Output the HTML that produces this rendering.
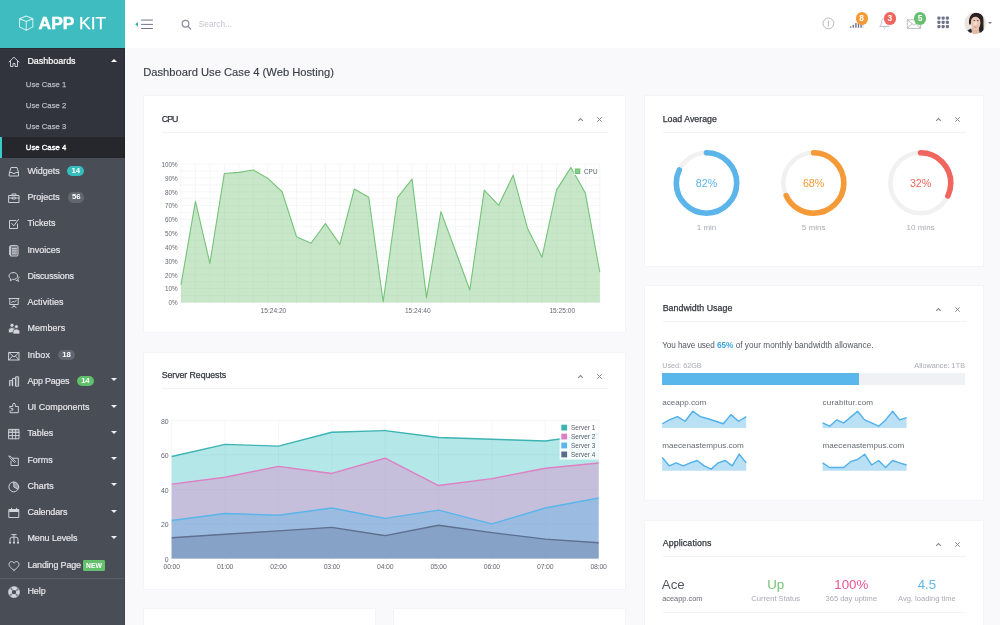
<!DOCTYPE html>
<html lang="en"><head><meta charset="utf-8"><title>App Kit - Dashboard Use Case 4 (Web Hosting)</title>
<style>
*{box-sizing:border-box}
html,body{margin:0;padding:0}
body{width:1000px;height:625px;overflow:hidden;position:relative;will-change:transform;background:#f9f9fb;font-family:"Liberation Sans", sans-serif;color:#3d4049}
.abs{position:absolute}
#sb{position:absolute;left:0;top:0;width:125px;height:625px;background:#494d56;overflow:hidden}
.sbr{position:absolute;left:124px;top:48px;width:1px;height:577px;background:rgba(0,0,0,.12)}
.logo{position:absolute;left:0;top:0;width:125px;height:48px;background:#3fbcc0}
.cube{position:absolute;left:18.1px;top:15px}
.lg{position:absolute;left:38.6px;top:11.6px;font-size:17.4px;line-height:22px;color:#fff;letter-spacing:0;white-space:nowrap;-webkit-text-stroke:.25px #fff}
.lg b{font-weight:700;-webkit-text-stroke:.5px #fff;letter-spacing:.05px;margin-right:-.3px}
.grp{position:absolute;left:0;top:48px;width:125px;height:110px;background:#31343c;border-top:1px solid #292b32}
.act{position:absolute;left:0;top:137px;width:125px;height:21px;background:#25272d;border-left:2px solid #37cbca}
.it{position:absolute;left:0;width:125px;height:26.25px}
.it .ic{position:absolute;left:8px;top:7.9px}
.it .tx{position:absolute;left:27.4px;top:0;line-height:26.1px;font-size:8.95px;color:#e4e5e9;white-space:nowrap;-webkit-text-stroke:.2px #e4e5e9}
.it.on .tx{color:#fff;-webkit-text-stroke:.2px #fff;top:0px}
.sub{position:absolute;left:25.8px;height:21px;line-height:21px;font-size:7.75px;color:#b4b7bf;white-space:nowrap;-webkit-text-stroke:.25px #b4b7bf}
.sub.cur{color:#fff;-webkit-text-stroke:.35px #fff}
.bdg{position:absolute;width:16.8px;height:10.1px;border-radius:5.1px;color:#fff;font-size:7.8px;font-weight:700;line-height:10.9px;text-align:center;letter-spacing:-.2px}
.new{position:absolute;left:82.8px;width:22.4px;height:11px;border-radius:1.3px;background:#63c06c;color:#fff;font-size:6.8px;font-weight:700;line-height:11.4px;text-align:center;letter-spacing:0}
.sdiv{position:absolute;left:0;width:125px;height:1px;background:#5a5e69}
.car{position:absolute;left:110.7px;width:0;height:0;border-left:3px solid transparent;border-right:3px solid transparent}
.car.dn{border-top:3.3px solid #eeeff2}
.car.up{border-bottom:3.3px solid #fff}
#hd{position:absolute;left:125px;top:0;width:875px;height:48px;background:#fff}
.srch{left:198.8px;top:17.3px;font-size:8.3px;line-height:14px;color:#c3c5cd}
.hb{position:absolute;top:12.4px;width:12.4px;height:12.4px;border-radius:50%;color:#fff;font-weight:700;font-size:8.4px;line-height:12.7px;text-align:center}
.ttl{left:143.2px;top:63.6px;font-size:11.2px;line-height:16px;color:#3a3d46;white-space:nowrap;-webkit-text-stroke:.15px #3a3d46}
.card{position:absolute;background:#fff;box-shadow:0 0 0 .6px #f0f1f3}
.ct{position:absolute;left:18.2px;top:15.4px;font-size:8.8px;line-height:14px;color:#33363e;white-space:nowrap;-webkit-text-stroke:.25px #33363e}
.cdiv{position:absolute;left:18px;right:17.4px;top:35.6px;height:1px;background:#f2f3f5}
.chart text,.ax text{font-size:6.6px;fill:#666973}
.chart text.lgd{font-size:6.4px;fill:#5d606a}
.ax2 text{font-size:6.9px}
.ax2 text.xl{letter-spacing:-.2px}
.t{position:absolute;white-space:nowrap}
</style></head>
<body>
<div id="hd"></div>

<svg class="abs" style="left:134px;top:17px" width="22" height="14" viewBox="0 0 22 14">
 <path d="M1.2 7.3 L4 4.9 V9.7 Z" fill="#2bb0ac"/>
 <path d="M7.1 3.05 H18.9 M7.1 7.4 H18.9 M7.1 11.5 H18.9" stroke="#6a6e84" stroke-width="0.95" fill="none"/>
</svg>
<svg class="abs" style="left:180px;top:18px" width="13" height="13" viewBox="0 0 13 13">
 <circle cx="5.5" cy="5.8" r="3.35" fill="none" stroke="#8b8e9b" stroke-width="1.2"/>
 <path d="M8.1 8.4 L10.6 11" stroke="#8b8e9b" stroke-width="1.3" stroke-linecap="round"/>
</svg>
<div class="abs srch">Search...</div>
<svg class="abs" style="left:821px;top:16px" width="15" height="15" viewBox="0 0 15 15">
 <circle cx="7.4" cy="7.4" r="5.4" fill="none" stroke="#9a9ca6" stroke-width="0.7"/>
 <path d="M7.4 4.6 V10.4" stroke="#9a9ca6" stroke-width="0.7"/>
</svg>
<svg class="abs" style="left:849px;top:18px" width="16" height="11" viewBox="0 0 16 11">
 <g fill="#6f7389"><rect x="1" y="8.3" width="1.4" height="1.4"/><rect x="3.6" y="6.8" width="1.4" height="2.9"/><rect x="6.2" y="5" width="1.4" height="4.7"/><rect x="8.8" y="3.4" width="1.4" height="6.3"/><rect x="11.4" y="1.8" width="1.4" height="7.9"/><rect x="13.6" y="1.8" width="0.8" height="7.9" opacity=".5"/></g>
</svg>
<div class="hb" style="left:855.5px;background:#f59a38">8</div>
<svg class="abs" style="left:877px;top:15px" width="15" height="15" viewBox="0 0 15 15">
 <path d="M7.3 3.6 C5.4 3.6 4.6 5 4.6 6.8 C4.6 9.2 3.6 10.6 2.7 11.5 H11.9 C11 10.6 10 9.2 10 6.8 C10 5 9.2 3.6 7.3 3.6 Z M6.3 12.6 Q7.3 14.2 8.3 12.6" fill="none" stroke="#a9abb4" stroke-width="0.7" stroke-linejoin="round"/>
</svg>
<div class="hb" style="left:883.6px;background:#f0655d">3</div>
<svg class="abs" style="left:906px;top:18px" width="16" height="12" viewBox="0 0 16 12">
 <path d="M1.3 1.8 H14.6 V10.4 H1.3 Z M1.3 1.8 L8 7.2 L14.6 1.8 M1.3 10.4 L6 5.8 M14.6 10.4 L10 5.8" fill="none" stroke="#9a9ca8" stroke-width="0.65" stroke-linejoin="round"/>
</svg>
<div class="hb" style="left:914px;background:#67bf6f">5</div>
<svg class="abs" style="left:937px;top:16px" width="13" height="13" viewBox="0 0 13 13">
 <g fill="#6f7389"><rect x="0.30" y="0.50" width="3.2" height="3.2" rx="1.1"/><rect x="4.55" y="0.50" width="3.2" height="3.2" rx="1.1"/><rect x="8.80" y="0.50" width="3.2" height="3.2" rx="1.1"/><rect x="0.30" y="4.75" width="3.2" height="3.2" rx="1.1"/><rect x="4.55" y="4.75" width="3.2" height="3.2" rx="1.1"/><rect x="8.80" y="4.75" width="3.2" height="3.2" rx="1.1"/><rect x="0.30" y="9.00" width="3.2" height="3.2" rx="1.1"/><rect x="4.55" y="9.00" width="3.2" height="3.2" rx="1.1"/><rect x="8.80" y="9.00" width="3.2" height="3.2" rx="1.1"/></g>
</svg>
<svg class="abs" style="left:964px;top:12px" width="23" height="23" viewBox="0 0 23 23">
 <defs><clipPath id="av"><circle cx="11.3" cy="11.2" r="10.8"/></clipPath>
 <filter id="bl" x="-10%" y="-10%" width="120%" height="120%"><feGaussianBlur stdDeviation="0.45"/></filter></defs>
 <g clip-path="url(#av)"><g filter="url(#bl)">
  <rect x="-2" y="-2" width="27" height="27" fill="#ebe4dd"/>
  <path d="M5.2 12.6 C4.2 7 6.4 0.9 12.4 0.8 C17.6 0.9 19.8 4.6 19.5 9 C19.4 13 19.8 16.5 19.4 19.6 L15.2 20 L13 9 L8 6.5 L6.6 12.4 Z" fill="#2a2124"/>
  <path d="M8 15.4 L14.6 15.2 L15.6 19.4 L17 23 H6 L7.4 19.2 Z" fill="#e3b9a4"/>
  <path d="M7 9.4 C7 6 9 4.4 11.6 4.4 C14.6 4.4 16.5 6.6 16.5 10 C16.5 14.2 14.4 18.2 11.8 18.4 C9 18.4 7 13.8 7 9.4 Z" fill="#e9c6b3"/>
  <path d="M7 8.4 C7.4 5 9.6 3 12.6 3.2 C15.8 3.4 17.4 6.4 17 10.6 C16.2 7.6 14.6 4.9 11.6 4.6 C9 4.6 7.6 6.4 7 8.4 Z" fill="#2a2124"/><ellipse cx="11.4" cy="10.6" rx="1.6" ry="3" fill="#f6dccd"/>
  <path d="M9.6 8.6 h1.7 M12.8 8.6 h1.7" stroke="#5a3a34" stroke-width="0.9"/>
  <path d="M9.4 14.4 Q11.6 16.8 14 14.2 Q11.6 15.2 9.4 14.4 Z" fill="#c8584e"/>
  <path d="M10 14.6 Q11.7 15.5 13.4 14.5 Q11.7 15 10 14.6Z" fill="#fff"/>
  <path d="M3.2 18.4 L7.2 16.6 L7.8 19.6 L5.8 23 H1 Z" fill="#23262c"/>
  <path d="M15 17.4 L18.2 18.8 L20 23 H15.4 L15.8 19.8 Z" fill="#23262c"/>
 </g></g>
</svg>
<div class="abs" style="left:988px;top:21.7px;width:0;height:0;border-left:2.1px solid transparent;border-right:2.1px solid transparent;border-top:2.5px solid #777b86"></div>

<div id="sb"><div class="logo"><svg class="cube" width="16.4" height="16.4" viewBox="0 0 16 16"><path fill="none" stroke="#fff" stroke-opacity=".78" stroke-width="1" stroke-linejoin="round" d="M8 1 L14.5 3.6 V11.6 L8 15 L1.5 11.6 V3.6 Z M1.5 3.6 L8 6.4 L14.5 3.6 M8 6.4 V15"/></svg><span class="lg"><b>APP</b> KIT</span></div>
<div class="grp"></div><div class="act"></div>
<div class="it on" style="top:48.00px"><svg class="ic" width="12" height="12" viewBox="0 0 12 12"><path fill="none" stroke="#d3d5db" stroke-width="0.95" stroke-linejoin="round" stroke-linecap="round" d="M1 6 L6 1.2 L11 6 M2.5 5 V10.5 H5 V7.5 H7 V10.5 H9.5 V5"/></svg><span class="tx">Dashboards</span></div>
<div class="car up" style="top:58.6px"></div>
<div class="sub" style="top:74px">Use Case 1</div>
<div class="sub" style="top:95px">Use Case 2</div>
<div class="sub" style="top:116px">Use Case 3</div>
<div class="sub cur" style="top:137px">Use Case 4</div>
<div class="it " style="top:158.00px"><svg class="ic" width="12" height="12" viewBox="0 0 12 12"><path fill="none" stroke="#d3d5db" stroke-width="0.95" stroke-linejoin="round" stroke-linecap="round" d="M1.5 6.5 L3 1.5 H9 L10.5 6.5 V10 H1.5 Z M1.5 6.5 H4 Q6 9 8 6.5 H10.5"/></svg><span class="tx">Widgets</span></div>
<div class="bdg" style="left:67.4px;top:166.22px;width:16.7px;background:#35bdbd">14</div>
<div class="it " style="top:184.25px"><svg class="ic" width="12" height="12" viewBox="0 0 12 12"><path fill="none" stroke="#d3d5db" stroke-width="0.95" stroke-linejoin="round" stroke-linecap="round" d="M1 3.5 H11 V10.5 H1 Z M4 3.5 V2 H8 V3.5 M1 6 H4.7 M7.3 6 H11 M4.7 5.2 H7.3 V7 H4.7 Z"/></svg><span class="tx">Projects</span></div>
<div class="bdg" style="left:68.3px;top:192.47px;width:15.8px;background:#616671">56</div>
<div class="it " style="top:210.50px"><svg class="ic" width="12" height="12" viewBox="0 0 12 12"><path fill="none" stroke="#d3d5db" stroke-width="0.95" stroke-linejoin="round" stroke-linecap="round" d="M9.5 6 V10.5 H1.5 V2.5 H8 M3.8 5.5 L5.8 7.8 L10.5 1.5"/></svg><span class="tx" style="top:-0.6px">Tickets</span></div>
<div class="it " style="top:236.75px"><svg class="ic" width="12" height="12" viewBox="0 0 12 12"><path fill="none" stroke="#d3d5db" stroke-width="0.95" stroke-linejoin="round" stroke-linecap="round" d="M1.6 1.6 V9.6 M2.8 0.6 H8.8 Q10 0.6 10 1.8 V9.8 Q10 11 8.8 11 H2.8 Z M4.4 3.4 H8.4 M4.4 5.2 H8.4 M4.4 7 H8.4 M4.4 8.8 H8.4"/><path d="M3 1 H9.6 V10.6 H3Z" fill="#d3d5db" opacity=".3"/></svg><span class="tx">Invoices</span></div>
<div class="it " style="top:263.00px"><svg class="ic" width="12" height="12" viewBox="0 0 12 12"><path fill="none" stroke="#d3d5db" stroke-width="0.95" stroke-linejoin="round" stroke-linecap="round" d="M5.3 1.5 C2.8 1.5 1 3 1 5 C1 6.2 1.7 7.2 2.7 7.8 L2.3 9.8 L4.5 8.4 C7.6 8.8 9.6 7 9.6 5 C9.6 3 7.8 1.5 5.3 1.5 Z M9.8 8.2 C10.6 7.6 11 7 11 6 M9.8 8.2 L10.6 10.3 L8 9.3"/></svg><span class="tx" style="letter-spacing:-0.1px">Discussions</span></div>
<div class="it " style="top:289.25px"><svg class="ic" width="12" height="12" viewBox="0 0 12 12"><path fill="none" stroke="#d3d5db" stroke-width="0.95" stroke-linejoin="round" stroke-linecap="round" d="M1 1.5 H11 M1.8 1.5 V7.5 H10.2 V1.5 M6 7.5 V9.5 M3.8 10.5 L6 9.2 L8.2 10.5 M3.5 5.8 L5 4.2 L6.3 5.3 L8.5 3"/></svg><span class="tx" style="letter-spacing:0.1px">Activities</span></div>
<div class="it " style="top:315.50px"><svg class="ic" width="12" height="12" viewBox="0 0 12 12"><g fill="#d3d5db" stroke="#494d56" stroke-width=".7"><circle cx="4" cy="2.3" r="2"/><path d="M0.5 9.8 V7.4 Q0.5 4.6 4 4.6 Q7.5 4.6 7.5 7.4 V9.8 Z"/><circle cx="8.4" cy="3.7" r="1.9"/><path d="M5 11 V8.6 Q5 6 8.4 6 Q11.8 6 11.8 8.6 V11 Z"/></g></svg><span class="tx" style="top:-0.6px;letter-spacing:0.08px">Members</span></div>
<div class="it " style="top:341.75px"><svg class="ic" width="12" height="12" viewBox="0 0 12 12"><path fill="none" stroke="#d3d5db" stroke-width="0.95" stroke-linejoin="round" stroke-linecap="round" d="M1 2.5 H11 V10 H1 Z M1 2.5 L6 7 L11 2.5 M1 10 L4.5 6 M11 10 L7.5 6"/></svg><span class="tx" style="letter-spacing:0.17px">Inbox</span></div>
<div class="bdg" style="left:57.9px;top:349.98px;width:17px;background:#616671">18</div>
<div class="it " style="top:368.00px"><svg class="ic" width="12" height="12" viewBox="0 0 12 12"><path fill="none" stroke="#d3d5db" stroke-width="0.95" stroke-linejoin="round" stroke-linecap="round" d="M1.6 9.8 V4.4 H4.6 V9.8 M4.6 9.8 V2.4 H7.6 V9.8 M7.6 9.8 V0.8 H10.6 V9.8 Z"/><path d="M1.9 4.7H4.3V9.5H1.9Z M7.9 1.1H10.3V9.5H7.9Z" fill="#d3d5db" opacity=".3"/></svg><span class="tx" style="letter-spacing:-0.22px">App Pages</span></div>
<div class="bdg" style="left:76.8px;top:376.23px;width:17px;background:#5fbf6a">14</div>
<div class="car dn" style="top:378.32px"></div>
<div class="it " style="top:394.25px"><svg class="ic" width="12" height="12" viewBox="0 0 12 12"><path fill="none" stroke="#d3d5db" stroke-width="0.95" stroke-linejoin="round" stroke-linecap="round" d="M2 4.5 H4.7 V2.8 Q4.7 1.3 6 1.3 Q7.3 1.3 7.3 2.8 V4.5 H10.3 V10.7 H2 V8.8 M2 4.5 V6 M3.3 6.6 H4.8 V8.2 H3.3"/></svg><span class="tx">UI Components</span></div>
<div class="car dn" style="top:404.57px"></div>
<div class="it " style="top:420.50px"><svg class="ic" width="12" height="12" viewBox="0 0 12 12"><path fill="none" stroke="#d3d5db" stroke-width="0.95" stroke-linejoin="round" stroke-linecap="round" d="M1 1.4 H11 V10.8 H1 Z M1 4.4 H11 M1 7.6 H11 M4.3 1.4 V10.8 M7.7 1.4 V10.8"/><path d="M1 1.4H11V4.4H1Z" fill="#d3d5db" opacity=".35"/></svg><span class="tx" style="top:-0.6px">Tables</span></div>
<div class="car dn" style="top:430.82px"></div>
<div class="it " style="top:446.75px"><svg class="ic" width="12" height="12" viewBox="0 0 12 12"><path fill="none" stroke="#d3d5db" stroke-width="0.95" stroke-linejoin="round" stroke-linecap="round" d="M4.5 3.2 H10.3 V10.5 H3 V6 M1.2 1 L2.8 1.6 L7.6 6.6 L6.6 7.6 L1.8 2.6 Z"/></svg><span class="tx">Forms</span></div>
<div class="car dn" style="top:457.07px"></div>
<div class="it " style="top:473.00px"><svg class="ic" width="12" height="12" viewBox="0 0 12 12"><circle cx="5.8" cy="5.9" r="4.9" fill="none" stroke="#d3d5db" stroke-width="0.95" stroke-linejoin="round" stroke-linecap="round"/><path fill="none" stroke="#d3d5db" stroke-width="0.95" stroke-linejoin="round" stroke-linecap="round" d="M5.8 1 V5.9 L10 8.4"/><path d="M5.8 5.9 V1 A4.9 4.9 0 0 1 10 8.4 Z" fill="#d3d5db" opacity=".55"/></svg><span class="tx">Charts</span></div>
<div class="car dn" style="top:483.32px"></div>
<div class="it " style="top:499.25px"><svg class="ic" width="12" height="12" viewBox="0 0 12 12"><path fill="none" stroke="#d3d5db" stroke-width="0.95" stroke-linejoin="round" stroke-linecap="round" d="M1.2 2.5 H10.8 V10.5 H1.2 Z M3.5 1.2 V3 M8.5 1.2 V3"/><path d="M1.2 2.5H10.8V5H1.2Z" fill="#d3d5db"/></svg><span class="tx" style="letter-spacing:-0.08px">Calendars</span></div>
<div class="car dn" style="top:509.57px"></div>
<div class="it " style="top:525.50px"><svg class="ic" width="12" height="12" viewBox="0 0 12 12"><path fill="none" stroke="#d3d5db" stroke-width="0.95" stroke-linejoin="round" stroke-linecap="round" d="M3.8 1.6 H8.2 M6 1.6 V9.6 M2 9.6 V6.2 Q2 4.2 4 4.2 H8 Q10 4.2 10 6.2 V9.6"/><g fill="#d3d5db"><circle cx="2" cy="9.7" r="1.05"/><circle cx="6" cy="9.7" r="1.05"/><circle cx="10" cy="9.7" r="1.05"/></g></svg><span class="tx" style="top:-0.6px;letter-spacing:-0.07px">Menu Levels</span></div>
<div class="car dn" style="top:535.83px"></div>
<div class="it " style="top:551.75px"><svg class="ic" width="12" height="12" viewBox="0 0 12 12"><path fill="none" stroke="#d3d5db" stroke-width="0.95" stroke-linejoin="round" stroke-linecap="round" d="M6 10.3 C2 7.5 1 5.8 1 4.2 C1 2.6 2.2 1.6 3.5 1.6 C4.6 1.6 5.5 2.2 6 3.2 C6.5 2.2 7.4 1.6 8.5 1.6 C9.8 1.6 11 2.6 11 4.2 C11 5.8 10 7.5 6 10.3 Z"/></svg><span class="tx" style="letter-spacing:-0.14px">Landing Page</span></div>
<div class="new" style="top:559.58px">NEW</div>
<div class="sdiv" style="top:577.50px"></div>
<div class="it " style="top:578.00px"><svg class="ic" width="12" height="12" viewBox="0 0 12 12"><circle cx="6" cy="6.1" r="3.9" fill="none" stroke="#d3d5db" stroke-width="3.4"/><circle cx="6" cy="6.1" r="3.9" fill="none" stroke="#494d56" stroke-width="3.4" stroke-dasharray="1.5 4.626" stroke-dashoffset="-2.31" opacity=".6"/><circle cx="6" cy="6.1" r="5.6" fill="none" stroke="#d3d5db" stroke-width=".5"/></svg><span class="tx">Help</span></div>
<div class="sbr"></div></div>
<div class="abs ttl">Dashboard Use Case 4 (Web Hosting)</div>
<div class="card" style="left:143.5px;top:95.9px;width:481.5px;height:236.6px"><div class="ct" style="margin-top:0.4px;letter-spacing:-0.9px">CPU</div><div class="cdiv" style="margin-top:0.4px"></div><svg class="abs" style="right:41.0px;top:19.5px" width="0" height="0"></svg><svg class="abs" style="left:433.4px;top:20.25px" width="7" height="6" viewBox="0 0 7 6"><path d="M1.2 4.9 L3.5 2.6 L5.8 4.9" fill="none" stroke="#858893" stroke-width="1.05"/></svg><svg class="abs" style="left:452.5px;top:20.15px" width="7" height="7" viewBox="0 0 7 7"><path d="M1.3 1.3 L5.7 5.7 M5.7 1.3 L1.3 5.7" fill="none" stroke="#858893" stroke-width="1"/></svg></div>
<div class="card" style="left:143.5px;top:352.5px;width:481.5px;height:236px"><div class="ct" style="margin-top:0px;letter-spacing:-0.07px">Server Requests</div><div class="cdiv" style="margin-top:0px"></div><svg class="abs" style="right:41.0px;top:19.5px" width="0" height="0"></svg><svg class="abs" style="left:433.4px;top:20.1px" width="7" height="6" viewBox="0 0 7 6"><path d="M1.2 4.9 L3.5 2.6 L5.8 4.9" fill="none" stroke="#858893" stroke-width="1.05"/></svg><svg class="abs" style="left:452.5px;top:20.0px" width="7" height="7" viewBox="0 0 7 7"><path d="M1.3 1.3 L5.7 5.7 M5.7 1.3 L1.3 5.7" fill="none" stroke="#858893" stroke-width="1"/></svg></div>
<div class="card" style="left:143.5px;top:608.5px;width:231px;height:40px"></div>
<div class="card" style="left:393.5px;top:608.5px;width:231.5px;height:40px"></div>
<div class="card" style="left:644.5px;top:95.9px;width:338.5px;height:169.9px"><div class="ct" style="margin-top:0.4px;letter-spacing:0px">Load Average</div><div class="cdiv" style="margin-top:0.4px"></div><svg class="abs" style="right:41.0px;top:19.5px" width="0" height="0"></svg><svg class="abs" style="left:290.4px;top:20.25px" width="7" height="6" viewBox="0 0 7 6"><path d="M1.2 4.9 L3.5 2.6 L5.8 4.9" fill="none" stroke="#858893" stroke-width="1.05"/></svg><svg class="abs" style="left:309.5px;top:20.15px" width="7" height="7" viewBox="0 0 7 7"><path d="M1.3 1.3 L5.7 5.7 M5.7 1.3 L1.3 5.7" fill="none" stroke="#858893" stroke-width="1"/></svg></div>
<div class="card" style="left:644.5px;top:285.5px;width:338.5px;height:214.7px"><div class="ct" style="margin-top:0px;letter-spacing:0.05px">Bandwidth Usage</div><div class="cdiv" style="margin-top:0px"></div><svg class="abs" style="right:41.0px;top:19.5px" width="0" height="0"></svg><svg class="abs" style="left:290.4px;top:20.1px" width="7" height="6" viewBox="0 0 7 6"><path d="M1.2 4.9 L3.5 2.6 L5.8 4.9" fill="none" stroke="#858893" stroke-width="1.05"/></svg><svg class="abs" style="left:309.5px;top:20.0px" width="7" height="7" viewBox="0 0 7 7"><path d="M1.3 1.3 L5.7 5.7 M5.7 1.3 L1.3 5.7" fill="none" stroke="#858893" stroke-width="1"/></svg></div>
<div class="card" style="left:644.5px;top:520.5px;width:338.5px;height:130px"><div class="ct" style="margin-top:0px;letter-spacing:0.12px">Applications</div><div class="cdiv" style="margin-top:0px"></div><svg class="abs" style="right:41.0px;top:19.5px" width="0" height="0"></svg><svg class="abs" style="left:290.4px;top:20.1px" width="7" height="6" viewBox="0 0 7 6"><path d="M1.2 4.9 L3.5 2.6 L5.8 4.9" fill="none" stroke="#858893" stroke-width="1.05"/></svg><svg class="abs" style="left:309.5px;top:20.0px" width="7" height="7" viewBox="0 0 7 7"><path d="M1.3 1.3 L5.7 5.7 M5.7 1.3 L1.3 5.7" fill="none" stroke="#858893" stroke-width="1"/></svg></div>
<svg class="abs chart" style="left:0;top:0" width="1000" height="625" viewBox="0 0 1000 625">
<path d="M181.00 164.10 V303.90 M195.44 164.10 V303.90 M209.88 164.10 V303.90 M224.32 164.10 V303.90 M238.77 164.10 V303.90 M253.21 164.10 V303.90 M267.65 164.10 V303.90 M282.09 164.10 V303.90 M296.53 164.10 V303.90 M310.97 164.10 V303.90 M325.41 164.10 V303.90 M339.86 164.10 V303.90 M354.30 164.10 V303.90 M368.74 164.10 V303.90 M383.18 164.10 V303.90 M397.62 164.10 V303.90 M412.06 164.10 V303.90 M426.50 164.10 V303.90 M440.94 164.10 V303.90 M455.39 164.10 V303.90 M469.83 164.10 V303.90 M484.27 164.10 V303.90 M498.71 164.10 V303.90 M513.15 164.10 V303.90 M527.59 164.10 V303.90 M542.03 164.10 V303.90 M556.48 164.10 V303.90 M570.92 164.10 V303.90 M585.36 164.10 V303.90 M599.80 164.10 V303.90 M179.50 302.40 H599.80 M179.50 295.48 H599.80 M179.50 288.57 H599.80 M179.50 281.65 H599.80 M179.50 274.74 H599.80 M179.50 267.82 H599.80 M179.50 260.91 H599.80 M179.50 253.99 H599.80 M179.50 247.08 H599.80 M179.50 240.16 H599.80 M179.50 233.25 H599.80 M179.50 226.33 H599.80 M179.50 219.42 H599.80 M179.50 212.50 H599.80 M179.50 205.59 H599.80 M179.50 198.68 H599.80 M179.50 191.76 H599.80 M179.50 184.84 H599.80 M179.50 177.93 H599.80 M179.50 171.01 H599.80 M179.50 164.10 H599.80" stroke="#f1f2f3" stroke-width="0.7" fill="none"/>
<path d="M181.00 284.84 L195.44 201.44 L209.88 263.40 L224.32 173.50 L238.77 172.40 L253.21 170.05 L267.65 178.21 L282.09 191.76 L296.53 236.71 L310.97 243.21 L325.41 223.57 L339.86 244.31 L354.30 188.99 L368.74 197.29 L383.18 301.71 L397.62 197.29 L412.06 179.04 L426.50 297.70 L440.94 211.68 L455.39 250.81 L469.83 289.95 L484.27 190.10 L498.71 205.31 L513.15 175.16 L527.59 228.55 L542.03 257.18 L556.48 190.10 L570.92 167.42 L585.36 193.14 L599.80 272.25 L599.80 302.40 L181.00 302.40 Z" fill="#7cc57f" fill-opacity="0.42"/>
<path d="M181.00 284.84 L195.44 201.44 L209.88 263.40 L224.32 173.50 L238.77 172.40 L253.21 170.05 L267.65 178.21 L282.09 191.76 L296.53 236.71 L310.97 243.21 L325.41 223.57 L339.86 244.31 L354.30 188.99 L368.74 197.29 L383.18 301.71 L397.62 197.29 L412.06 179.04 L426.50 297.70 L440.94 211.68 L455.39 250.81 L469.83 289.95 L484.27 190.10 L498.71 205.31 L513.15 175.16 L527.59 228.55 L542.03 257.18 L556.48 190.10 L570.92 167.42 L585.36 193.14 L599.80 272.25" fill="none" stroke="#76c47a" stroke-width="1.12" stroke-linejoin="round"/>
<g class="ax"><text x="177.5" y="305.30" text-anchor="end" style="font-size:6.3px">0%</text><text x="177.5" y="291.47" text-anchor="end" style="font-size:6.3px">10%</text><text x="177.5" y="277.64" text-anchor="end" style="font-size:6.3px">20%</text><text x="177.5" y="263.81" text-anchor="end" style="font-size:6.3px">30%</text><text x="177.5" y="249.98" text-anchor="end" style="font-size:6.3px">40%</text><text x="177.5" y="236.15" text-anchor="end" style="font-size:6.3px">50%</text><text x="177.5" y="222.32" text-anchor="end" style="font-size:6.3px">60%</text><text x="177.5" y="208.49" text-anchor="end" style="font-size:6.3px">70%</text><text x="177.5" y="194.66" text-anchor="end" style="font-size:6.3px">80%</text><text x="177.5" y="180.83" text-anchor="end" style="font-size:6.3px">90%</text><text x="177.5" y="167.00" text-anchor="end" style="font-size:6.3px">100%</text><text x="273.4" y="313" text-anchor="middle">15:24:20</text><text x="417.8" y="313" text-anchor="middle">15:24:40</text><text x="562.3" y="313" text-anchor="middle">15:25:00</text></g>
<rect x="573.8" y="167.5" width="7.5" height="7.5" fill="#fff" fill-opacity=".85"/><rect x="574.8" y="168.5" width="5.5" height="5.5" fill="#6cc071"/><rect x="575.8" y="169.5" width="3.5" height="3.5" fill="#86cc8a"/>
<text x="584" y="173.9" class="lgd">CPU</text>


<path d="M171.70 420.20 V560.00 M225.06 420.20 V560.00 M278.43 420.20 V560.00 M331.79 420.20 V560.00 M385.15 420.20 V560.00 M438.51 420.20 V560.00 M491.88 420.20 V560.00 M545.24 420.20 V560.00 M598.60 420.20 V560.00 M170.20 558.50 H598.60 M170.20 523.92 H598.60 M170.20 489.35 H598.60 M170.20 454.77 H598.60 M170.20 420.20 H598.60" stroke="#eff0f1" stroke-width="0.7" fill="none"/>
<path d="M171.70 456.50 L225.06 444.40 L278.43 446.13 L331.79 432.30 L385.15 430.57 L438.51 437.49 L491.88 439.22 L545.24 440.94 L598.60 433.68 L598.60 558.50 L171.70 558.50 Z" fill="#3bbfbf" fill-opacity="0.38"/><path d="M171.70 456.50 L225.06 444.40 L278.43 446.13 L331.79 432.30 L385.15 430.57 L438.51 437.49 L491.88 439.22 L545.24 440.94 L598.60 433.68" fill="none" stroke="#3db3b3" stroke-width="1.4" stroke-linejoin="round"/>
<path d="M171.70 484.16 L225.06 477.25 L278.43 466.36 L331.79 473.45 L385.15 458.23 L438.51 485.55 L491.88 478.63 L545.24 468.26 L598.60 463.07 L598.60 558.50 L171.70 558.50 Z" fill="#e27fc8" fill-opacity="0.38"/><path d="M171.70 484.16 L225.06 477.25 L278.43 466.36 L331.79 473.45 L385.15 458.23 L438.51 485.55 L491.88 478.63 L545.24 468.26 L598.60 463.07" fill="none" stroke="#df7fc4" stroke-width="1.4" stroke-linejoin="round"/>
<path d="M171.70 520.47 L225.06 513.55 L278.43 515.28 L331.79 508.02 L385.15 518.39 L438.51 510.09 L491.88 523.92 L545.24 508.02 L598.60 497.99 L598.60 558.50 L171.70 558.50 Z" fill="#5bb5ea" fill-opacity="0.39"/><path d="M171.70 520.47 L225.06 513.55 L278.43 515.28 L331.79 508.02 L385.15 518.39 L438.51 510.09 L491.88 523.92 L545.24 508.02 L598.60 497.99" fill="none" stroke="#5bb5ea" stroke-width="1.4" stroke-linejoin="round"/>
<path d="M171.70 537.75 L225.06 534.30 L278.43 530.84 L331.79 527.38 L385.15 535.68 L438.51 525.31 L491.88 532.57 L545.24 539.14 L598.60 542.77 L598.60 558.50 L171.70 558.50 Z" fill="#5a6b8c" fill-opacity="0.3"/><path d="M171.70 537.75 L225.06 534.30 L278.43 530.84 L331.79 527.38 L385.15 535.68 L438.51 525.31 L491.88 532.57 L545.24 539.14 L598.60 542.77" fill="none" stroke="#5f6f8e" stroke-width="1.4" stroke-linejoin="round"/>
<g class="ax ax2"><text x="168.6" y="561.90" text-anchor="end">0</text><text x="168.6" y="527.32" text-anchor="end">20</text><text x="168.6" y="492.75" text-anchor="end">40</text><text x="168.6" y="458.17" text-anchor="end">60</text><text x="168.6" y="423.60" text-anchor="end">80</text><text x="171.70" y="569.2" text-anchor="middle" class="xl">00:00</text><text x="225.06" y="569.2" text-anchor="middle" class="xl">01:00</text><text x="278.43" y="569.2" text-anchor="middle" class="xl">02:00</text><text x="331.79" y="569.2" text-anchor="middle" class="xl">03:00</text><text x="385.15" y="569.2" text-anchor="middle" class="xl">04:00</text><text x="438.51" y="569.2" text-anchor="middle" class="xl">05:00</text><text x="491.88" y="569.2" text-anchor="middle" class="xl">06:00</text><text x="545.24" y="569.2" text-anchor="middle" class="xl">07:00</text><text x="598.60" y="569.2" text-anchor="middle" class="xl">08:00</text></g>
<rect x="559.6" y="423" width="39.2" height="36.6" fill="#fff" fill-opacity=".85"/>
<rect x="561.3" y="424.70" width="5.8" height="5.8" fill="#3db3b3"/><text x="571.1" y="430.00" class="lgd">Server 1</text><rect x="561.3" y="433.65" width="5.8" height="5.8" fill="#dc7fc4"/><text x="571.1" y="438.95" class="lgd">Server 2</text><rect x="561.3" y="442.60" width="5.8" height="5.8" fill="#5bb5ea"/><text x="571.1" y="447.90" class="lgd">Server 3</text><rect x="561.3" y="451.55" width="5.8" height="5.8" fill="#5a6b8c"/><text x="571.1" y="456.85" class="lgd">Server 4</text>
</svg>
<svg class="abs" style="left:0;top:0" width="1000" height="625" viewBox="0 0 1000 625"><circle cx="706.5" cy="183" r="30.2" fill="none" stroke="#f1f1f2" stroke-width="4.6"/><circle cx="706.5" cy="183" r="30.2" fill="none" stroke="#5bb5ea" stroke-width="5.6" stroke-linecap="round" stroke-dasharray="155.60 189.75" transform="rotate(-90 706.5 183)"/><text x="706.5" y="187.0" text-anchor="middle" font-size="10.7" fill="#5bb5ea">82%</text><text x="706.5" y="230.2" text-anchor="middle" font-size="8" fill="#a9abb4">1 min</text><circle cx="813.6" cy="183" r="30.2" fill="none" stroke="#f1f1f2" stroke-width="4.6"/><circle cx="813.6" cy="183" r="30.2" fill="none" stroke="#f59a38" stroke-width="5.6" stroke-linecap="round" stroke-dasharray="129.03 189.75" transform="rotate(-90 813.6 183)"/><text x="813.6" y="187.0" text-anchor="middle" font-size="10.7" fill="#f59a38">68%</text><text x="813.6" y="230.2" text-anchor="middle" font-size="8" fill="#a9abb4">5 mins</text><circle cx="920.6" cy="183" r="30.2" fill="none" stroke="#f1f1f2" stroke-width="4.6"/><circle cx="920.6" cy="183" r="30.2" fill="none" stroke="#f0655d" stroke-width="5.6" stroke-linecap="round" stroke-dasharray="60.72 189.75" transform="rotate(-90 920.6 183)"/><text x="920.6" y="187.0" text-anchor="middle" font-size="10.7" fill="#f0655d">32%</text><text x="920.6" y="230.2" text-anchor="middle" font-size="8" fill="#a9abb4">10 mins</text></svg>
<div class="t" style="left:662.2px;top:339px;font-size:8.2px;line-height:13px;color:#555862"><span style="letter-spacing:-.1px">You have used </span><span style="color:#3ea6e4;font-weight:700">65%</span><span style="letter-spacing:.04px"> of your monthly bandwidth allowance.</span></div>
<div class="t" style="left:662.2px;top:359.5px;font-size:7.25px;line-height:11px;color:#aaacb4">Used: 62GB</div>
<div class="t" style="right:35px;top:359.5px;font-size:7.3px;line-height:11px;color:#aaacb4">Allowance: 1TB</div>
<div class="abs" style="left:662.2px;top:373.2px;width:302.8px;height:11.6px;background:#f0f1f4"></div>
<div class="abs" style="left:662.2px;top:373.2px;width:196.8px;height:11.6px;background:#5ab7ec"></div>
<div class="t" style="left:662.2px;top:396.5px;font-size:8.12px;line-height:12px;color:#686b75">aceapp.com</div>
<div class="t" style="left:822.6px;top:396.5px;font-size:8.12px;line-height:12px;color:#686b75;letter-spacing:.15px">curabitur.com</div>
<div class="t" style="left:662.2px;top:439.5px;font-size:8.12px;line-height:12px;color:#686b75">maecenastempus.com</div>
<div class="t" style="left:822.6px;top:439.5px;font-size:8.12px;line-height:12px;color:#686b75">maecenastempus.com</div>
<svg class="abs" style="left:0;top:0" width="1000" height="625" viewBox="0 0 1000 625"><path d="M662.20 423.75 L669.84 419.60 L677.47 416.61 L685.11 421.26 L692.75 411.30 L700.38 416.61 L708.02 418.77 L715.65 421.26 L723.29 423.75 L730.93 414.62 L738.56 421.26 L746.20 416.61 L746.20 427.90 L662.20 427.90 Z" fill="#5bb5ea" fill-opacity=".42"/><path d="M662.20 423.75 L669.84 419.60 L677.47 416.61 L685.11 421.26 L692.75 411.30 L700.38 416.61 L708.02 418.77 L715.65 421.26 L723.29 423.75 L730.93 414.62 L738.56 421.26 L746.20 416.61" fill="none" stroke="#4fb0ea" stroke-width="1.4" stroke-linejoin="round"/><path d="M822.60 422.92 L829.60 426.24 L836.60 419.93 L843.60 422.92 L850.60 417.11 L857.60 411.30 L864.60 419.93 L871.60 422.92 L878.60 426.24 L885.60 419.93 L892.60 411.30 L899.60 419.93 L906.60 417.61 L906.60 427.90 L822.60 427.90 Z" fill="#5bb5ea" fill-opacity=".42"/><path d="M822.60 422.92 L829.60 426.24 L836.60 419.93 L843.60 422.92 L850.60 417.11 L857.60 411.30 L864.60 419.93 L871.60 422.92 L878.60 426.24 L885.60 419.93 L892.60 411.30 L899.60 419.93 L906.60 417.61" fill="none" stroke="#4fb0ea" stroke-width="1.4" stroke-linejoin="round"/><path d="M662.20 457.52 L669.20 465.82 L676.20 462.83 L683.20 465.82 L690.20 462.83 L697.20 460.51 L704.20 465.82 L711.20 469.14 L718.20 462.83 L725.20 460.51 L732.20 465.82 L739.20 454.20 L746.20 462.83 L746.20 470.80 L662.20 470.80 Z" fill="#5bb5ea" fill-opacity=".42"/><path d="M662.20 457.52 L669.20 465.82 L676.20 462.83 L683.20 465.82 L690.20 462.83 L697.20 460.51 L704.20 465.82 L711.20 469.14 L718.20 462.83 L725.20 460.51 L732.20 465.82 L739.20 454.20 L746.20 462.83" fill="none" stroke="#4fb0ea" stroke-width="1.4" stroke-linejoin="round"/><path d="M822.60 462.83 L829.60 467.48 L836.60 467.48 L843.60 467.48 L850.60 461.67 L857.60 459.51 L864.60 454.20 L871.60 464.99 L878.60 460.51 L885.60 467.48 L892.60 460.51 L899.60 462.83 L906.60 464.99 L906.60 470.80 L822.60 470.80 Z" fill="#5bb5ea" fill-opacity=".42"/><path d="M822.60 462.83 L829.60 467.48 L836.60 467.48 L843.60 467.48 L850.60 461.67 L857.60 459.51 L864.60 454.20 L871.60 464.99 L878.60 460.51 L885.60 467.48 L892.60 460.51 L899.60 462.83 L906.60 464.99" fill="none" stroke="#4fb0ea" stroke-width="1.4" stroke-linejoin="round"/></svg>
<div class="t" style="left:661.8px;top:575.5px;font-size:13.3px;line-height:18px;color:#555862">Ace</div>
<div class="t" style="left:662.2px;top:592.5px;font-size:7.4px;line-height:12px;color:#686b75">aceapp.com</div>
<div class="t ctr" style="left:735.7px;width:80px;text-align:center;top:575.5px;font-size:13.3px;line-height:18px;color:#74c477">Up</div>
<div class="t ctr" style="left:735.7px;width:80px;text-align:center;top:592.5px;font-size:7.55px;line-height:12px;color:#aaacb4">Current Status</div>
<div class="t ctr" style="left:811.3px;width:80px;text-align:center;top:575.5px;font-size:13.3px;line-height:18px;color:#ea5597">100%</div>
<div class="t ctr" style="left:811.3px;width:80px;text-align:center;top:592.5px;font-size:7.55px;line-height:12px;color:#aaacb4">365 day uptime</div>
<div class="t ctr" style="left:886.9px;width:80px;text-align:center;top:575.5px;font-size:13.3px;line-height:18px;color:#62b8eb">4.5</div>
<div class="t ctr" style="left:886.9px;width:80px;text-align:center;top:592.5px;font-size:7.55px;line-height:12px;color:#aaacb4">Avg. loading time</div>
<div class="abs" style="left:662.5px;top:612px;width:302.5px;height:1px;background:#f1f2f4"></div>
</body></html>
